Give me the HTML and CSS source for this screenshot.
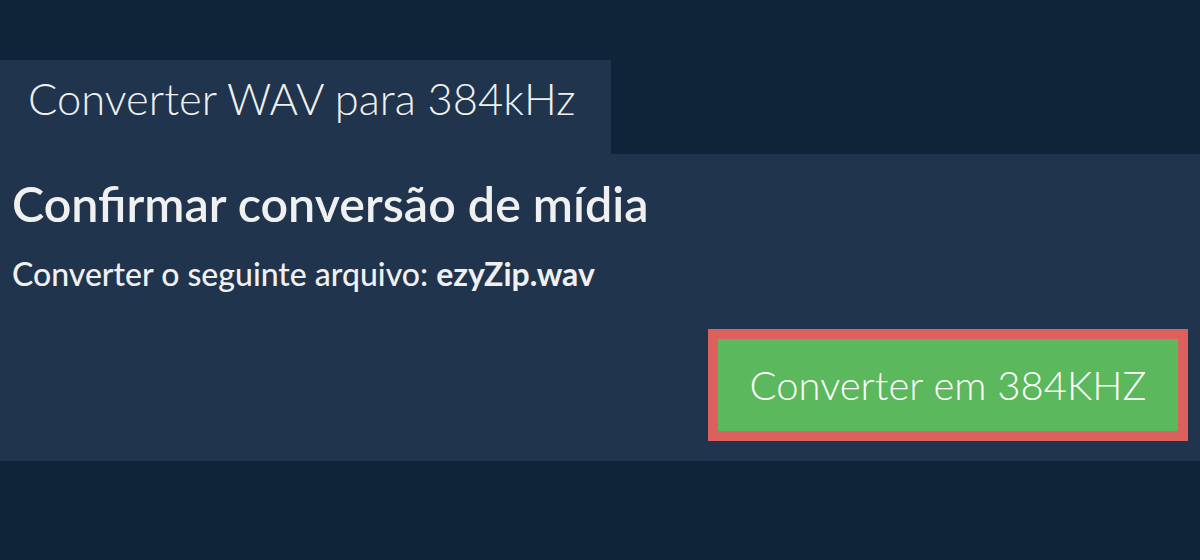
FILE: index.html
```html
<!DOCTYPE html>
<html lang="pt-BR">
<head>
  <meta charset="UTF-8" />
  <title>Converter WAV para 384kHz</title>
  <link rel="stylesheet" href="styles.css">
</head>
<body>
  <div class="page">
    <div class="tab">Converter WAV para 384kHz</div>
    <div class="panel">
      <h2>Confirmar conversão de mídia</h2>
      <p class="file">Converter o seguinte arquivo: <b>ezyZip.wav</b></p>
      <div class="actions">
        <button class="convert">Converter em 384KHZ</button>
      </div>
    </div>
  </div>
</body>
</html>
```

FILE: styles.css
```css
body {
  margin: 0;
  font-family: 'Lato', sans-serif;
  background: #0f2339;
  color: #f0f0f0;
}
.page {
  padding-top: 60px;
}
.tab {
  display: inline-block;
  vertical-align: top;
  width: 611px;
  height: 94px;
  box-sizing: border-box;
  padding: 12px 0 0 28px;
  background: #20354d;
  font-size: 43.5px;
  font-weight: 300;
  line-height: 1.2;
}
.panel {
  background: #20354d;
  padding: 20px 12px 0 12px;
  height: 307px;
  box-sizing: border-box;
}
h2 {
  margin: 0;
  font-size: 48.4px;
  font-weight: 600;
  line-height: 1.2;
}
.file {
  margin: 23px 0 0;
  font-size: 32px;
  font-weight: 500;
  line-height: 1.2;
}
.file b {
  font-weight: 700;
}
.actions {
  display: flex;
  justify-content: flex-end;
  margin-top: 36px;
}
.convert {
  width: 480px;
  height: 112px;
  padding: 0;
  background: #5cb85c;
  border: 10px solid #dc605d;
  color: #fff;
  font-family: 'Lato', sans-serif;
  font-size: 40px;
  font-weight: 300;
  cursor: pointer;
}
```
